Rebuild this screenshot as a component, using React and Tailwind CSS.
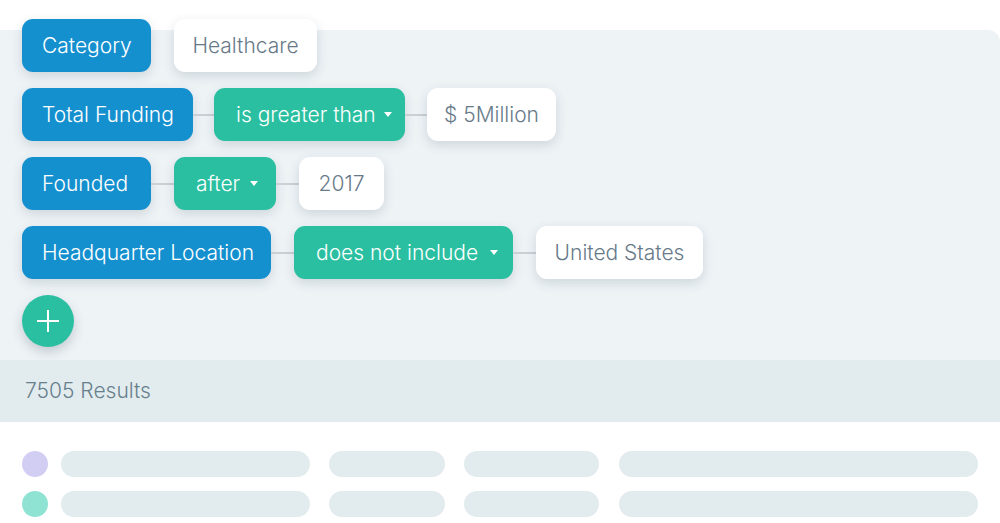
const rows = [
  { field: ['Category', 129], value: ['Healthcare', 143], gap1: 23 },
  { field: ['Total Funding', 171], op: ['is greater than', 191, 13], value: ['$ 5Million', 129], line: true, gap1: 21, gap2: 22 },
  { field: ['Founded', 129], op: ['after', 102, 18], value: ['2017', 85], line: true, gap1: 23, gap2: 23 },
  { field: ['Headquarter Location', 249], op: ['does not include', 219, 15], value: ['United States', 167], line: true, gap1: 23, gap2: 23 },
]

const chip = 'h-[53px] flex items-center rounded-[11px] text-[21px] font-light shadow-[0_4px_12px_rgba(40,60,80,0.16)] whitespace-nowrap shrink-0'

function Connector({ show, w }) {
  return <div className={`h-[2px] ${show ? 'bg-[#c9d0d6]' : ''}`} style={{ width: w }} />
}

function Caret() {
  return <span className="w-0 h-0 border-l-[4px] border-r-[4px] border-t-[5px] border-l-transparent border-r-transparent border-t-white" />
}

function FilterRow({ row }) {
  return (
    <div className="flex items-center">
      <div className={`${chip} bg-[#1590cf] text-white pl-[20px]`} style={{ width: row.field[1] }}>{row.field[0]}</div>
      <Connector show={row.line} w={row.gap1} />
      {row.op && (
        <>
          <div className={`${chip} bg-[#2bbfa1] text-white pl-[22px] justify-between`} style={{ width: row.op[1], paddingRight: row.op[2] }}>
            {row.op[0]}
            <Caret />
          </div>
          <Connector show w={row.gap2} />
        </>
      )}
      <div className={`${chip} bg-white text-[#687a89] justify-center`} style={{ width: row.value[1] }}>{row.value[0]}</div>
    </div>
  )
}

function SkeletonRow({ dot }) {
  return (
    <div className="flex items-center h-[26px]">
      <div className={`w-[26px] h-[26px] rounded-full ${dot}`} />
      <div className="ml-[13px] w-[249px] h-[26px] rounded-full bg-[#e2ecee]" />
      <div className="ml-[19px] w-[116px] h-[26px] rounded-full bg-[#e2ecee]" />
      <div className="ml-[19px] w-[135px] h-[26px] rounded-full bg-[#e2ecee]" />
      <div className="ml-[20px] w-[359px] h-[26px] rounded-full bg-[#e2ecee]" />
    </div>
  )
}

export default function App() {
  return (
    <div className="w-[1000px] h-[523px] bg-white overflow-hidden flex flex-col" style={{ fontFamily: 'Inter, Roboto, "Noto Sans", sans-serif' }}>
      {/* filter panel, chips ride over its top edge */}
      <div className="mt-[30px] bg-[#eef3f6] rounded-tr-[12px] pl-[22px] pb-[13px] flex flex-col">
        <div className="-mt-[11px] flex flex-col gap-[16px]">
          {rows.map(r => <FilterRow key={r.field[0]} row={r} />)}
          <button className="w-[52px] h-[52px] rounded-full bg-[#2bbfa1] flex items-center justify-center shadow-[0_5px_12px_rgba(40,60,80,0.22)]">
            <svg width="24" height="24" viewBox="0 0 24 24" fill="none" stroke="white" strokeWidth="2">
              <path d="M12 1v22M1 12h22" />
            </svg>
          </button>
        </div>
      </div>
      <div className="h-[62px] shrink-0 bg-[#e2ecef] flex items-center pl-[25px] text-[21px] font-light text-[#687f8c]">
        7505 Results
      </div>
      <div className="pt-[29px] pl-[22px] flex flex-col gap-[14px]">
        <SkeletonRow dot="bg-[#d2cdf2]" />
        <SkeletonRow dot="bg-[#8fe3d2]" />
      </div>
    </div>
  )
}
